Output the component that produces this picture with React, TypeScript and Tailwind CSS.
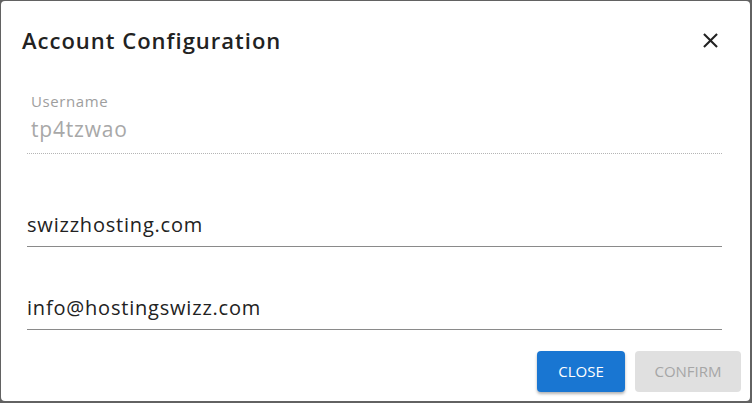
import React from "react";

export default function App() {
  return (
    <div className="w-[752px] h-[403px] bg-[#626262] pt-px pl-px pr-[2px] pb-[2px]" style={{ fontFamily: "'Open Sans', Lato, sans-serif" }}>
      <div className="w-full h-full bg-white rounded-[4px] flex flex-col">
        <div className="flex items-center justify-between pl-[21px] pr-[27px] h-[78px]">
          <h2 className="text-[22px] font-semibold text-[#222] leading-none tracking-[1px]">Account Configuration</h2>
          <svg width="25" height="25" viewBox="0 0 24 24" className="text-[#222]">
            <path fill="currentColor" d="M19 6.41 17.59 5 12 10.59 6.41 5 5 6.41 10.59 12 5 17.59 6.41 19 12 13.41 17.59 19 19 17.59 13.41 12z" />
          </svg>
        </div>
        <div className="pl-[26px] pr-[28px] flex flex-col">
          <div className="pt-[14px] flex flex-col">
            <div className="pl-[4px] text-[15px] leading-[16px] text-[#9e9e9e] tracking-[0.6px]">Username</div>
            <div className="pl-[4px] mt-[8px] text-[21px] leading-[24px] text-[#a8a8a8] tracking-[0.8px]">tp4tzwao</div>
            <div className="mt-[12px] border-b border-dotted border-[#b5b5b5]"></div>
          </div>
          <div className="pt-[59px] text-[20px] leading-[24px] text-[#222] tracking-[0.8px]">swizzhosting.com</div>
          <div className="mt-[9px] h-px bg-[#8a8a8a]"></div>
          <div className="pt-[49px] text-[20px] leading-[24px] text-[#222] tracking-[0.8px]">info@hostingswizz.com</div>
          <div className="mt-[9px] h-px bg-[#8a8a8a]"></div>
        </div>
        <div className="flex justify-end gap-[10px] pr-[9px] mt-[21px]">
          <button className="w-[88px] h-[41px] rounded-[4px] bg-[#1976d2] text-white text-[15px] shadow-[0_2px_3px_rgba(0,0,0,0.3)]">CLOSE</button>
          <button className="w-[106px] h-[41px] rounded-[4px] bg-[#e0e0e0] text-[#a6a6a6] text-[15px]">CONFIRM</button>
        </div>
      </div>
    </div>
  );
}
